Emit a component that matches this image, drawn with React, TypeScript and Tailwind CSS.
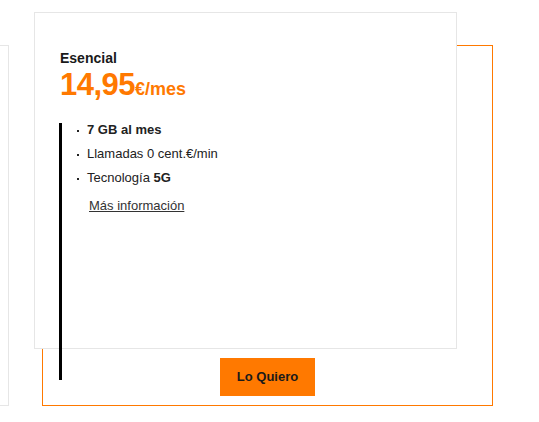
import React from "react";

const features = [
  { key: "gb", content: <strong className="font-bold">7 GB al mes</strong> },
  { key: "calls", content: <span>Llamadas 0 cent.€/min</span> },
  {
    key: "tech",
    content: (
      <span>
        Tecnología <strong className="font-bold">5G</strong>
      </span>
    ),
  },
];

const PlanCard = () => {
  return (
    <div className="relative ml-[33px] mt-[45px] flex h-[361px] w-[451px] shrink-0 flex-col items-center border border-[#ff7900]">
      <div className="-ml-[9px] -mt-[34px] h-[337px] w-[423px] self-start border border-[#e6e6e6] bg-white pl-[25px] pt-[37px]">
        <h3 className="text-[14px] font-bold leading-[16px] text-[#1a1a1a]">Esencial</h3>
        <p className="mt-[3px] text-[31px] font-bold leading-[32px] tracking-[-0.5px] text-[#ff7900]">
          14,95<span className="text-[18px] tracking-normal">€/mes</span>
        </p>
        <ul className="mt-[13px] text-[13px] leading-[24px] text-[#222]">
          {features.map((f) => (
            <li key={f.key} className="flex items-center">
              <span className="relative top-[1px] ml-[17px] h-[2px] w-[2px] bg-[#222]" />
              <span className="ml-[8px]">{f.content}</span>
            </li>
          ))}
        </ul>
        <a href="#" className="ml-[29px] mt-[4px] block text-[13px] leading-[24px] text-[#333] underline">
          Más información
        </a>
      </div>
      <button className="mt-[9px] h-[38px] w-[95px] bg-[#ff7900] text-[13px] font-bold text-[#1a1a1a]">Lo Quiero</button>
      <div className="absolute left-[16px] top-[77px] h-[257px] w-[3px] bg-black" />
    </div>
  );
};

export default function App() {
  return (
    <div className="flex h-[422px] w-[539px] items-start overflow-hidden bg-white font-['Liberation_Sans',Arial,sans-serif]">
      <div className="mt-[45px] h-[361px] w-[9px] shrink-0 border-y border-r border-[#e6e6e6]" />
      <PlanCard />
    </div>
  );
}
